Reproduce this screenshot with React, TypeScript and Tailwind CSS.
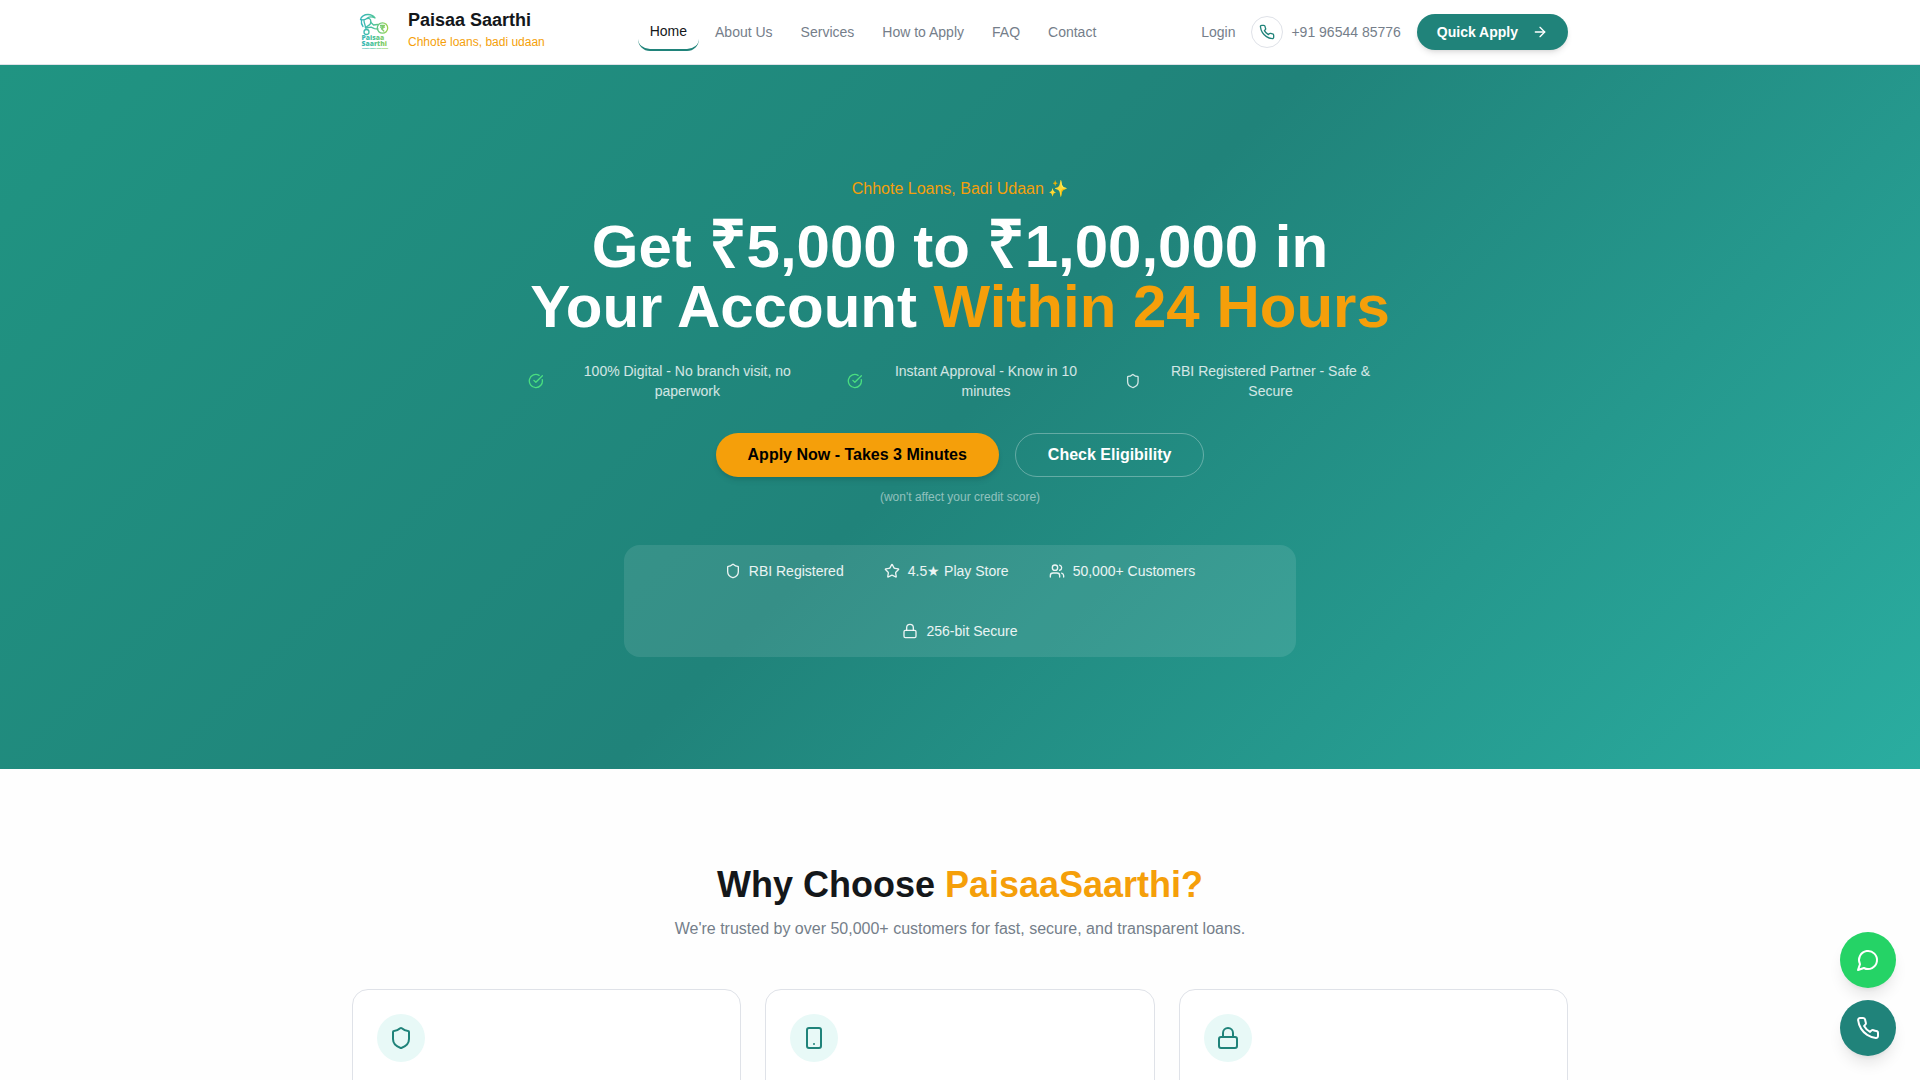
import { ArrowRight, CircleCheckBig, Lock, Shield, Smartphone, Star, Users } from 'lucide-react';

const navLinks = ['About Us', 'Services', 'How to Apply', 'FAQ', 'Contact'];

const trustItems = [
    { icon: Shield, label: 'RBI Registered' },
    { icon: Star, label: '4.5★ Play Store' },
    { icon: Users, label: '50,000+ Customers' },
    { icon: Lock, label: '256-bit Secure' },
];

const featureIcons = [
    { icon: Shield, name: 'Security' },
    { icon: Smartphone, name: 'Mobile' },
    { icon: Lock, name: 'Privacy' },
];

function PhoneIcon({ className }: { className: string }) {
    return (
        <svg
            viewBox="0 0 24 24"
            fill="none"
            stroke="currentColor"
            strokeWidth="2"
            strokeLinecap="round"
            strokeLinejoin="round"
            className={className}
        >
            <path d="M22 16.92v3a2 2 0 0 1-2.18 2 19.79 19.79 0 0 1-8.63-3.07 19.5 19.5 0 0 1-6-6 19.79 19.79 0 0 1-3.07-8.67A2 2 0 0 1 4.11 2h3a2 2 0 0 1 2 1.72 12.84 12.84 0 0 0 .7 2.81 2 2 0 0 1-.45 2.11L8.09 9.91a16 16 0 0 0 6 6l1.27-1.27a2 2 0 0 1 2.11-.45 12.84 12.84 0 0 0 2.81.7A2 2 0 0 1 22 16.92z" />
        </svg>
    );
}

function ChatIcon({ className }: { className: string }) {
    return (
        <svg
            viewBox="0 0 24 24"
            fill="none"
            stroke="currentColor"
            strokeWidth="2"
            strokeLinecap="round"
            strokeLinejoin="round"
            className={className}
        >
            <path d="M7.9 20A9 9 0 1 0 4 16.1L2 22Z" />
        </svg>
    );
}

function Logo() {
    return (
        <svg viewBox="0 0 44 44" className="h-11 w-11" role="img" aria-label="Paisaa Saarthi">
            <defs>
                <linearGradient id="logo" gradientUnits="userSpaceOnUse" x1="8" y1="0" x2="36" y2="0">
                    <stop offset="0" stopColor="#35b5bd" />
                    <stop offset="0.5" stopColor="#4cc39a" />
                    <stop offset="1" stopColor="#9bd24e" />
                </linearGradient>
            </defs>
            <g fill="none" stroke="url(#logo)" strokeWidth="1.3" strokeLinecap="round" strokeLinejoin="round">
                <path d="M8.500 9.500c.5-3 4-5 7.500-5 3.500 0 5.500 1.500 7 3.500-3-1.500-5.500-1.500-7.500 0-1.500 1.500-4 2.200-7 1.500z" />
                <path d="M9.500 10.500c-.5 2 0 4 1.500 6M12 10.500c0 3 1.500 4 1.500 7.500M15.500 8.500c3-.5 4 2 3 5-.5 2-3 2-4.500 4" />
                <path d="M18.500 12l3 3 4-.5M14 18l5-.8 3.500 1.500 3.500.3" />
                <circle cx="14.500" cy="22" r="2.500" />
                <circle cx="30.500" cy="18" r="5.200" />
                <path d="M28.500 15.500h4M28.500 17.200h4M29.500 15.500c2.500 0 2.500 3.200 0 3.200l2.300 2.300" />
            </g>
            <g fill="url(#logo)" fontFamily="'Open Sans', sans-serif" fontWeight="800">
                <text x="9.500" y="30" fontSize="6.800">Paisaa</text>
                <text x="9.500" y="36" fontSize="6.800">Saarthi</text>
                <text x="10" y="38.800" fontSize="2">Chhote loans, badi udaan</text>
            </g>
        </svg>
    );
}

function Header() {
    return (
        <header className="sticky top-0 z-40 border-b border-[#dfe2e8] bg-white">
            <div className="mx-auto flex h-16 max-w-7xl items-center justify-between px-8">
                <a href="#" className="flex items-center gap-3">
                    <Logo />
                    <div className="pb-2">
                        <div className="text-lg leading-7 font-bold text-[#14171a]">Paisaa Saarthi</div>
                        <div className="text-xs text-[#f59f0a]">Chhote loans, badi udaan</div>
                    </div>
                </a>

                <nav className="flex items-center gap-1 text-sm text-[#757e8a]">
                    <a href="#" className="rounded-xl border-b-2 border-[#20837a] px-3 py-2 text-[#14171a]">
                        Home
                    </a>
                    {navLinks.map((link) => (
                        <a key={link} href="#" className="rounded-xl px-3 py-2 hover:text-[#14171a]">
                            {link}
                        </a>
                    ))}
                </nav>

                <div className="flex items-center gap-4 text-sm text-[#757e8a]">
                    <a href="#">Login</a>
                    <a href="tel:+919654485776" className="flex items-center gap-2">
                        <span className="flex h-8 w-8 items-center justify-center rounded-full border border-[#dfe2e8]">
                            <PhoneIcon className="h-4 w-4 text-[#20837a]" />
                        </span>
                        +91 96544 85776
                    </a>
                    <button className="flex h-9 items-center gap-3.5 rounded-full bg-[#20837a] px-5 font-semibold text-white shadow-md">
                        Quick Apply
                        <ArrowRight className="h-4 w-4" />
                    </button>
                </div>
            </div>
        </header>
    );
}

function Rupee() {
    return <span className="font-['Open_Sans',sans-serif] text-[66px] leading-0">₹</span>;
}

function Hero() {
    return (
        <section className="bg-linear-[135deg,#209482_0%,#20837a_50%,#2aada0_100%] py-28 text-center">
            <div className="mx-auto max-w-4xl px-4">
                <p className="text-base text-[#f59f0a]">Chhote Loans, Badi Udaan ✨</p>
                <h1 className="mt-4 text-6xl leading-none font-bold text-white">
                    Get <Rupee />5,000 to <Rupee />1,00,000 in Your Account{' '}
                    <span className="text-[#f59f0a]">Within 24 Hours</span>
                </h1>

                <div className="mt-6 flex justify-center gap-6 text-sm text-white/80">
                    <div className="flex items-center gap-2">
                        <CircleCheckBig className="h-4 w-4 text-[#4ade80]" />
                        <span>100% Digital - No branch visit, no paperwork</span>
                    </div>
                    <div className="flex items-center gap-2">
                        <CircleCheckBig className="h-4 w-4 text-[#4ade80]" />
                        <span>Instant Approval - Know in 10 minutes</span>
                    </div>
                    <div className="flex items-center gap-2">
                        <Shield className="h-4 w-4" />
                        <span>RBI Registered Partner - Safe &amp; Secure</span>
                    </div>
                </div>

                <div className="mt-8 flex justify-center gap-4">
                    <button className="h-11 rounded-full bg-[#f59f0a] px-8 text-base font-semibold text-black shadow-md">
                        Apply Now - Takes 3 Minutes
                    </button>
                    <button className="h-11 rounded-full border border-white/30 px-8 text-base font-semibold text-white">
                        Check Eligibility
                    </button>
                </div>
                <p className="mt-3 text-xs text-white/50">(won't affect your credit score)</p>

                <div className="mx-auto mt-10 flex max-w-2xl flex-wrap justify-center gap-10 rounded-2xl bg-white/10 px-6 py-4 text-sm text-white/90">
                    {trustItems.map(({ icon: Icon, label }) => (
                        <div key={label} className="flex items-center gap-2">
                            <Icon className="h-4 w-4" />
                            <span>{label}</span>
                        </div>
                    ))}
                </div>
            </div>
        </section>
    );
}

function WhyChoose() {
    return (
        <section className="mx-auto max-w-7xl px-8 py-24">
            <div className="text-center">
                <h2 className="text-4xl font-bold text-[#14171a]">
                    Why Choose <span className="text-[#f59f0a]">PaisaaSaarthi?</span>
                </h2>
                <p className="mt-3 text-base text-[#757e8a]">
                    We're trusted by over 50,000+ customers for fast, secure, and transparent loans.
                </p>
            </div>

            <div className="mt-12 grid grid-cols-3 gap-6">
                {featureIcons.map(({ icon: Icon, name }) => (
                    <div key={name} className="rounded-2xl border border-[#dfe2e8] bg-white p-6 pb-16">
                        <div className="flex h-12 w-12 items-center justify-center rounded-full bg-[#e8f9f7]">
                            <Icon className="h-6 w-6 text-[#20837a]" />
                        </div>
                    </div>
                ))}
            </div>
        </section>
    );
}

export default function App() {
    return (
        <div className="min-h-screen bg-[#fefefe] font-['Liberation_Sans',Arial,sans-serif]">
            <Header />
            <main>
                <Hero />
                <WhyChoose />
            </main>

            {/* Floating contact buttons */}
            <div className="fixed right-6 bottom-6 z-50 flex flex-col gap-3">
                <a
                    href="#"
                    aria-label="WhatsApp"
                    className="flex h-14 w-14 items-center justify-center rounded-full bg-[#25d366] text-white shadow-lg"
                >
                    <ChatIcon className="h-6 w-6" />
                </a>
                <a
                    href="tel:+919654485776"
                    aria-label="Call"
                    className="flex h-14 w-14 items-center justify-center rounded-full bg-[#20837a] text-white shadow-lg"
                >
                    <PhoneIcon className="h-6 w-6" />
                </a>
            </div>
        </div>
    );
}
